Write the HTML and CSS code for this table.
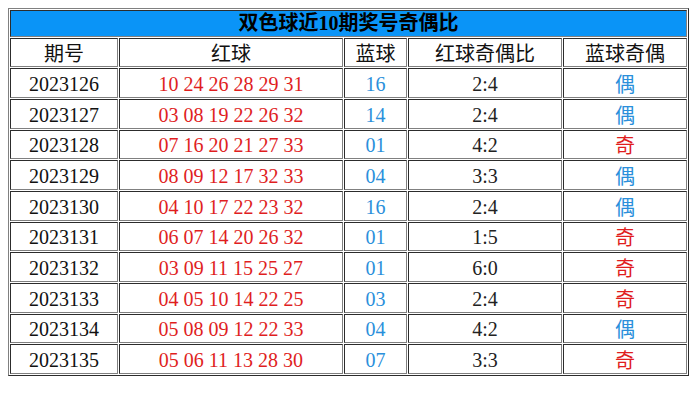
FILE: index.html
```html
<!DOCTYPE html>
<html lang="zh">
<head>
<meta charset="utf-8">
<title>双色球近10期奖号奇偶比</title>
<link rel="stylesheet" href="styles.css">
</head>
<body>
<table class="lottery">
  <colgroup>
    <col class="c1"><col class="c2"><col class="c3"><col class="c4"><col class="c5">
  </colgroup>
  <tr class="title-row"><td class="title" colspan="5">双色球近10期奖号奇偶比</td></tr>
  <tr class="head"><td>期号</td><td>红球</td><td>蓝球</td><td>红球奇偶比</td><td>蓝球奇偶</td></tr>
  <tr><td>2023126</td><td class="red">10 24 26 28 29 31</td><td class="blue">16</td><td class="ratio">2:4</td><td class="blue cjk">偶</td></tr>
  <tr><td>2023127</td><td class="red">03 08 19 22 26 32</td><td class="blue">14</td><td class="ratio">2:4</td><td class="blue cjk">偶</td></tr>
  <tr><td>2023128</td><td class="red">07 16 20 21 27 33</td><td class="blue">01</td><td class="ratio">4:2</td><td class="red cjk">奇</td></tr>
  <tr><td>2023129</td><td class="red">08 09 12 17 32 33</td><td class="blue">04</td><td class="ratio">3:3</td><td class="blue cjk">偶</td></tr>
  <tr><td>2023130</td><td class="red">04 10 17 22 23 32</td><td class="blue">16</td><td class="ratio">2:4</td><td class="blue cjk">偶</td></tr>
  <tr><td>2023131</td><td class="red">06 07 14 20 26 32</td><td class="blue">01</td><td class="ratio">1:5</td><td class="red cjk">奇</td></tr>
  <tr><td>2023132</td><td class="red">03 09 11 15 25 27</td><td class="blue">01</td><td class="ratio">6:0</td><td class="red cjk">奇</td></tr>
  <tr><td>2023133</td><td class="red">04 05 10 14 22 25</td><td class="blue">03</td><td class="ratio">2:4</td><td class="red cjk">奇</td></tr>
  <tr><td>2023134</td><td class="red">05 08 09 12 22 33</td><td class="blue">04</td><td class="ratio">4:2</td><td class="blue cjk">偶</td></tr>
  <tr><td>2023135</td><td class="red">05 06 11 13 28 30</td><td class="blue">07</td><td class="ratio">3:3</td><td class="red cjk">奇</td></tr>
</table>
</body>
</html>
```
FILE: styles.css
```css
html, body {
  margin: 0;
  padding: 0;
  background: #ffffff;
}
body {
  padding: 8px;
  font-family: "Liberation Serif", "Noto Sans CJK SC", serif;
  font-size: 20px;
  color: #111;
}
.lottery {
  width: 681px;
  table-layout: fixed;
  border: 1px outset grey;
  border-collapse: separate;
  border-spacing: 1px;
}
.c1 { width: 108px; }
.c2 { width: 224px; }
.c3 { width: 63px; }
.c4 { width: 154px; }
.c5 { width: 124px; }
.lottery td {
  border: 1px inset grey;
  padding: 2px 1px 0;
  line-height: 24px;
  text-align: center;
  white-space: nowrap;
  box-sizing: border-box;
  height: 29.67px;
}
.lottery .title-row td {
  height: 26.6px;
  padding: 0 1px;
  background: #0a94f7;
  font-weight: bold;
  font-size: 20px;
  line-height: 24px;
  color: #000;
}
.head td {
  font-family: "Noto Sans CJK SC", sans-serif;
  color: #111;
}
.red { color: #e01e1e; }
.blue { color: #2a8fdb; }
.ratio { color: #222; }
.lottery td.cjk {
  font-family: "Noto Sans CJK SC", sans-serif;
}
```
